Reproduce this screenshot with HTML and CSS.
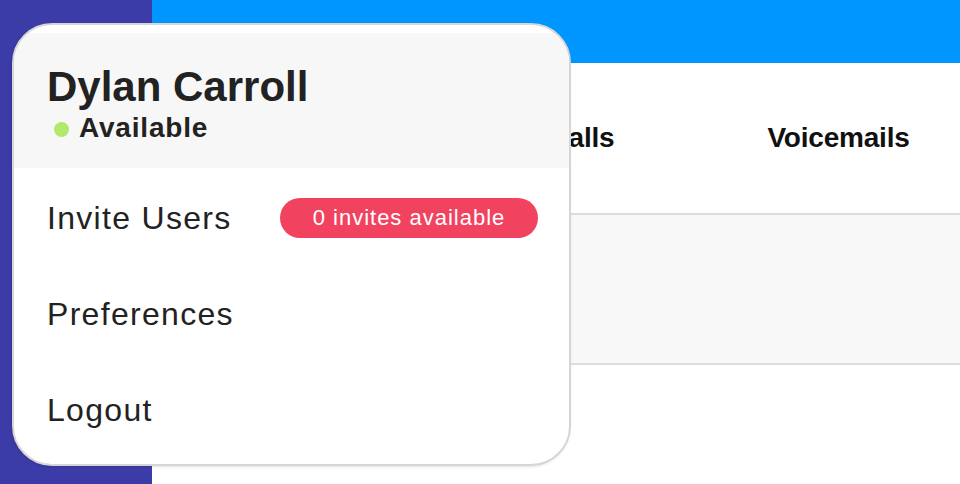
FILE: index.html
```html
<!DOCTYPE html>
<html lang="en">

<head>
    <meta charset="UTF-8">
    <title>Account menu</title>
    <link rel="stylesheet" href="styles.css">
</head>

<body>

    <div class="app">
        <aside class="sidebar"></aside>

        <main class="content">
            <div class="topbar"></div>
            <nav class="tabs">
                <div class="tab">Contacts</div>
                <div class="tab">Calls</div>
                <div class="tab">Voicemails</div>
            </nav>
            <div class="panel"></div>
        </main>
    </div>

    <!-- user dropdown, open -->
    <div class="user-menu">
        <div class="user-head">
            <div class="user-name">Dylan Carroll</div>
            <div class="user-status"><span class="dot"></span>Available</div>
        </div>
        <ul class="menu-list">
            <li class="menu-item">
                <span>Invite Users</span>
                <span class="badge">0 invites available</span>
            </li>
            <li class="menu-item">Preferences</li>
            <li class="menu-item">Logout</li>
        </ul>
    </div>

</body>

</html>
```

FILE: styles.css
```css
body,
html {
    height: 100%;
    margin: 0;
    font-family: "Liberation Sans", Arial, sans-serif;
}

.app {
    display: flex;
    height: 100%;
}

.sidebar {
    width: 152px;
    flex-shrink: 0;
    background-color: #3c3ca8;
    /* purple */
}

.content {
    flex: 1;
    display: flex;
    flex-direction: column;
    background-color: #fff;
}

.topbar {
    height: 63px;
    background-color: #0096ff;
}

.tabs {
    display: flex;
    height: 150px;
    padding-left: 44px;
    border-bottom: 2px solid #dcdcdc;
}

.tab {
    width: 257px;
    display: flex;
    align-items: center;
    justify-content: center;
    font-size: 28px;
    font-weight: 700;
    letter-spacing: -0.2px;
    color: #111;
}

.panel {
    height: 148px;
    background-color: #f8f8f8;
    border-bottom: 2px solid #dcdcdc;
}

/* dropdown sits over the page */
.user-menu {
    position: absolute;
    left: 12px;
    top: 23px;
    width: 559px;
    height: 443px;
    box-sizing: border-box;
    padding-top: 8px;
    background-color: #fff;
    border: 2px solid #d6d6d6;
    border-radius: 40px;
    box-shadow: -1px 1px 3px rgba(0, 0, 0, 0.12);
    overflow: hidden;
    color: #222;
}

.user-head {
    height: 135px;
    box-sizing: border-box;
    padding: 30px 0 0 33px;
    background-color: #f7f7f7;
}

.user-name {
    font-size: 42px;
    font-weight: 700;
    line-height: 48px;
}

.user-status {
    display: flex;
    align-items: center;
    margin-top: 1px;
    padding-left: 7px;
    font-size: 28px;
    font-weight: 700;
    line-height: 32px;
    letter-spacing: 0.8px;
}

.dot {
    width: 15px;
    height: 15px;
    margin: 2px 10px 0 0;
    border-radius: 50%;
    background-color: #b2e86c;
}

.menu-list {
    list-style: none;
    margin: 2px 0 0;
    padding: 0;
}

.menu-item {
    display: flex;
    align-items: center;
    justify-content: space-between;
    height: 96px;
    padding: 0 31px 0 33px;
    font-size: 32px;
    letter-spacing: 1.3px;
}

.badge {
    width: 258px;
    height: 40px;
    border-radius: 20px;
    background-color: #f1435f;
    color: #fff;
    font-size: 22px;
    line-height: 40px;
    letter-spacing: 1px;
    text-align: center;
}
```
